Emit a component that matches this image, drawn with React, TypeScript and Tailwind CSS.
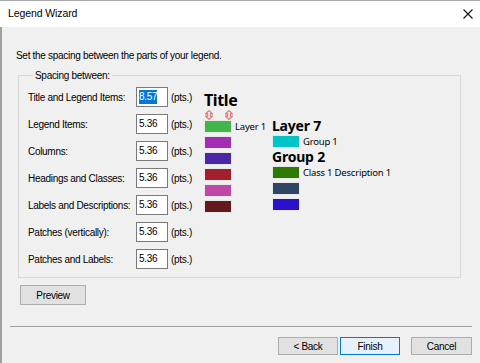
import React from "react";

const font = { fontFamily: '"Liberation Sans", Arial, sans-serif' };
const pfont = { fontFamily: '"Noto Sans", "Open Sans", sans-serif' };

const rows: [string, string][] = [
  ["Title and Legend Items:", "8.57"],
  ["Legend Items:", "5.36"],
  ["Columns:", "5.36"],
  ["Headings and Classes:", "5.36"],
  ["Labels and Descriptions:", "5.36"],
  ["Patches (vertically):", "5.36"],
  ["Patches and Labels:", "5.36"],
];

function Arrow() {
  return (
    <svg width="8" height="10" viewBox="0 0 8 10" fill="none" stroke="#e4767a" strokeWidth="1.2">
      <path d="M4 0.6 L7.4 3.8 L5.4 3.8 L5.4 6.2 L7.4 6.2 L4 9.4 L0.6 6.2 L2.6 6.2 L2.6 3.8 L0.6 3.8 Z" />
    </svg>
  );
}

function Patch({ color }: { color: string }) {
  return <div className="w-[28px] h-[13px] border border-[#e8e8e8] shrink-0" style={{ background: color }} />;
}

const txt = "text-[10px] tracking-[-0.3px]";

export default function App() {
  return (
    <div className="w-[480px] h-[363px] bg-[#f0f0f0] overflow-hidden border-t border-[#a8a8a8] flex flex-col text-[#000]" style={font}>
      <div className="h-[26px] bg-white flex items-center justify-between pl-[8px] pr-[7px] shrink-0">
        <span className="text-[10.5px] tracking-[-0.1px]">Legend Wizard</span>
        <svg width="10" height="10" viewBox="0 0 10 10" stroke="#111" strokeWidth="1.1">
          <path d="M0.5 0.5 L9.5 9.5 M9.5 0.5 L0.5 9.5" />
        </svg>
      </div>
      <div className="flex-1 border-l-2 border-[#a0a0a0] flex flex-col">
        <div className={`pl-[14px] pt-[22px] leading-[13px] ${txt}`}>
          Set the spacing between the parts of your legend.
        </div>
        <fieldset className="ml-[16px] mt-[7px] w-[443px] h-[209px] border border-[#d8d8d8] pl-[9px] pb-[7px]">
          <legend className={`ml-[5px] px-[2px] leading-[13px] ${txt}`}>Spacing between:</legend>
          <div className="flex mt-[5px]">
            <div className="flex flex-col gap-[7px]">
              {rows.map(([label, val], i) => (
                <div key={label} className={`flex items-center h-[20px] ${txt}`}>
                  <span className="w-[108px] shrink-0 whitespace-nowrap">{label}</span>
                  <div className="w-[32px] h-[20px] shrink-0 bg-white border border-[#7a7a7a] flex items-center pl-[2px]">
                    <span className={i === 0 ? "bg-[#0078d7] text-white leading-[14px]" : "leading-[14px]"}>{val}</span>
                  </div>
                  <span className="ml-[3px] w-[28px] shrink-0 whitespace-nowrap">(pts.)</span>
                </div>
              ))}
            </div>
            <div className="ml-[5px] flex" style={pfont}>
              <div className="flex flex-col">
                <div className="h-[19px] mt-[4px] text-[16px] leading-[19px] font-bold tracking-[-0.4px]">Title</div>
                <div className="flex h-[10px] items-center pl-[1px] gap-[12px]">
                  <Arrow />
                  <Arrow />
                </div>
                <div className="flex flex-col gap-[3px]">
                  <div className="flex items-center">
                    <Patch color="#3fb54a" />
                    <span className="ml-[3px] text-[9.5px] leading-[12px] tracking-[-0.2px] whitespace-nowrap">Layer 1</span>
                  </div>
                  <Patch color="#a12eb5" />
                  <Patch color="#4a27a8" />
                  <Patch color="#a31f2b" />
                  <Patch color="#c046a8" />
                  <Patch color="#641a1c" />
                </div>
              </div>
              <div className="flex flex-col ml-[6px] mt-[31px]">
                <div className="h-[16px] text-[14px] leading-[16px] font-bold tracking-[-0.2px] whitespace-nowrap">Layer 7</div>
                <div className="flex items-center mt-[1px]">
                  <Patch color="#00c4c6" />
                  <span className="ml-[3px] text-[9.5px] leading-[12px] tracking-[-0.2px] whitespace-nowrap">Group 1</span>
                </div>
                <div className="h-[17px] text-[14px] leading-[17px] font-bold tracking-[-0.2px] whitespace-nowrap">Group 2</div>
                <div className="flex flex-col gap-[3px] mt-[1px]">
                  <div className="flex items-center">
                    <Patch color="#2d7a00" />
                    <span className="ml-[3px] text-[9.5px] leading-[12px] tracking-[-0.2px] whitespace-nowrap">Class 1 Description 1</span>
                  </div>
                  <Patch color="#2f4563" />
                  <Patch color="#2b10cc" />
                </div>
              </div>
            </div>
          </div>
        </fieldset>
        <div className="ml-[18px] mt-[7px]">
          <button className={`w-[66px] h-[20px] bg-[#e1e1e1] border border-[#adadad] flex items-center justify-center ${txt}`}>Preview</button>
        </div>
        <div className="mt-[21px] ml-[8px] w-[462px] h-[1px] bg-[#a0a0a0]" />
        <div className="mt-[10px] flex pl-[276px]">
          <button className={`w-[60px] h-[18px] bg-[#e1e1e1] border border-[#adadad] flex items-center justify-center ${txt}`}>&lt; Back</button>
          <button className={`ml-[2px] w-[60px] h-[18px] bg-[#e5f1fb] border border-[#0078d7] flex items-center justify-center ${txt}`}>Finish</button>
          <button className={`ml-[11px] w-[61px] h-[18px] bg-[#e1e1e1] border border-[#adadad] flex items-center justify-center ${txt}`}>Cancel</button>
        </div>
      </div>
    </div>
  );
}
